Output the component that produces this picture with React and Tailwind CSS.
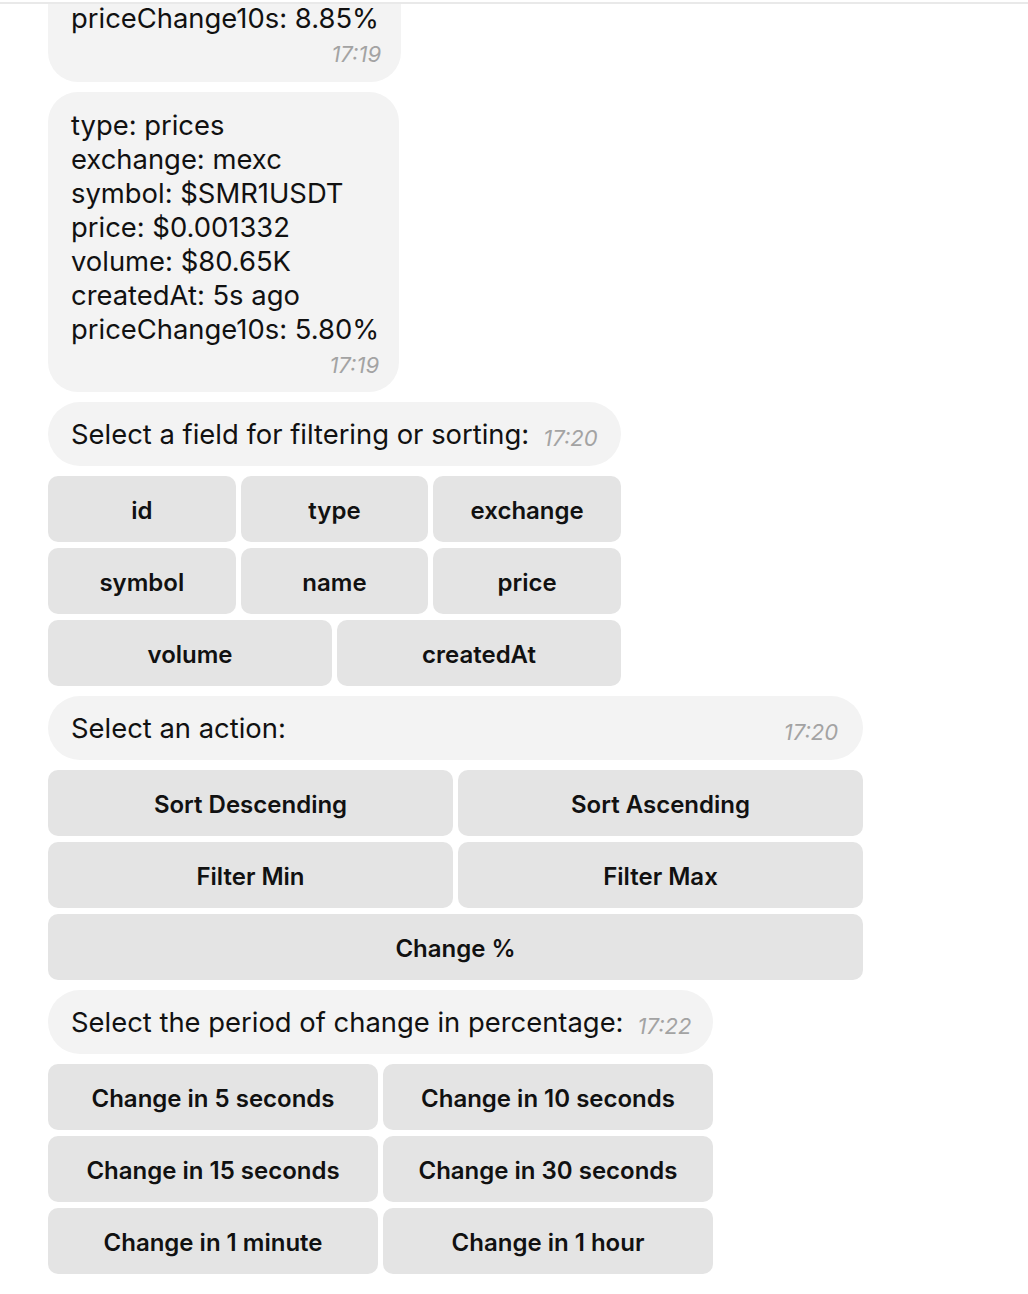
import React from 'react';

const Time = ({ children, className = '' }) => (
  <span className={`italic text-[22px] leading-[24px] text-[#a3a3a3] ${className}`}>{children}</span>
);

const KeyButton = ({ label, className = '' }) => (
  <div className={`h-[66px] pt-[4px] rounded-[10px] bg-[#e4e4e4] flex items-center justify-center text-[24px] font-semibold text-[#111] ${className}`}>
    {label}
  </div>
);

const InlineBubble = ({ text, time, width, spread }) => (
  <div
    className={`h-[64px] rounded-full bg-[#f3f3f3] flex items-center pl-[23px] pr-[25px] ${spread ? 'justify-between' : 'gap-[14px]'} ${width}`}
  >
    <span className="text-[27.4px] leading-[34px] text-[#111] whitespace-nowrap">{text}</span>
    <Time className="mt-[8px]">{time}</Time>
  </div>
);

const PriceBubble = ({ lines, time, className = '', lineClass = 'leading-[34px]', timeGap = 'mt-[7px]' }) => (
  <div className={`bg-[#f3f3f3] pl-[23px] pr-[20px] ${className}`}>
    {lines.map((l) => (
      <div key={l} className={`text-[27.4px] text-[#111] whitespace-nowrap ${lineClass}`}>{l}</div>
    ))}
    <div className={`flex justify-end ${timeGap}`}>
      <Time>{time}</Time>
    </div>
  </div>
);

export default function App() {
  const fields = ['id', 'type', 'exchange', 'symbol', 'name', 'price'];
  const periods = [
    'Change in 5 seconds',
    'Change in 10 seconds',
    'Change in 15 seconds',
    'Change in 30 seconds',
    'Change in 1 minute',
    'Change in 1 hour',
  ];

  return (
    <div className="h-[1294px] bg-white overflow-hidden" style={{ fontFamily: 'Inter, "Liberation Sans", sans-serif' }}>
      <div className="mt-[2px] h-[2px] bg-[#e9e9e9]"></div>

      <div className="flex flex-col gap-[10px] pl-[48px]">
        {/* last price message, its top scrolled out of view */}
        <PriceBubble
          className="w-[353px] rounded-b-[30px] pb-[16px]"
          lines={['priceChange10s: 8.85%']}
          lineClass="leading-[28px]"
          timeGap="mt-[10px]"
          time="17:19"
        />

        <PriceBubble
          className="w-[351px] rounded-[30px] pt-[16px] pb-[15px]"
          lines={[
            'type: prices',
            'exchange: mexc',
            'symbol: $SMR1USDT',
            'price: $0.001332',
            'volume: $80.65K',
            'createdAt: 5s ago',
            'priceChange10s: 5.80%',
          ]}
          time="17:19"
        />

        {/* field picker */}
        <InlineBubble text="Select a field for filtering or sorting:" time="17:20" width="w-[573px]" />
        <div className="w-[573px] flex flex-col gap-[6px]">
          <div className="grid grid-cols-3 gap-x-[5px] gap-y-[6px]">
            {fields.map((f) => (
              <KeyButton key={f} label={f} />
            ))}
          </div>
          <div className="grid grid-cols-2 gap-x-[5px]">
            <KeyButton label="volume" />
            <KeyButton label="createdAt" />
          </div>
        </div>

        {/* action picker */}
        <InlineBubble text="Select an action:" time="17:20" width="w-[815px]" spread />
        <div className="w-[815px] grid grid-cols-2 gap-x-[5px] gap-y-[6px]">
          <KeyButton label="Sort Descending" />
          <KeyButton label="Sort Ascending" />
          <KeyButton label="Filter Min" />
          <KeyButton label="Filter Max" />
          <KeyButton label="Change %" className="col-span-2" />
        </div>

        {/* period picker */}
        <InlineBubble text="Select the period of change in percentage:" time="17:22" width="w-[665px]" />
        <div className="w-[665px] grid grid-cols-2 gap-x-[5px] gap-y-[6px]">
          {periods.map((p) => (
            <KeyButton key={p} label={p} />
          ))}
        </div>
      </div>
    </div>
  );
}
